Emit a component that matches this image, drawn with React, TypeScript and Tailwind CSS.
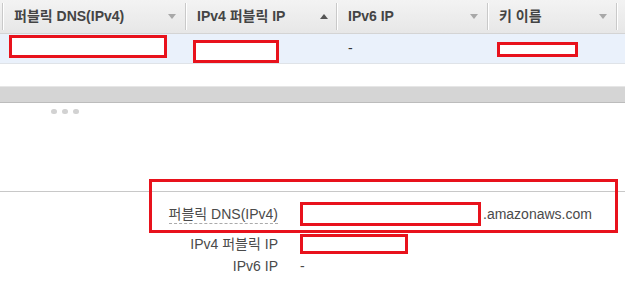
const font = { fontFamily: '"Liberation Sans", "Noto Sans CJK KR", sans-serif' };

function DownArrow() {
  return <span className="ml-auto mr-[9px] h-0 w-0 border-x-[4px] border-t-[5px] border-x-transparent border-t-[#a8a8a8]" />;
}

function UpArrow() {
  return <span className="ml-auto mr-[8px] h-0 w-0 border-x-[4px] border-b-[5px] border-x-transparent border-b-[#555]" />;
}

function HeaderCell({ label, sort }: { label?: string; sort?: 'up' | 'down' }) {
  return (
    <div className="flex h-full items-center py-[3px]">
      <span className="h-full w-[2px] border-l border-[#c9c9c9] bg-white" />
      <div className="flex flex-1 items-center pl-[10px]">
        {label && <span className="text-[14px] font-bold text-[#444]">{label}</span>}
        {sort === 'down' && <DownArrow />}
        {sort === 'up' && <UpArrow />}
      </div>
    </div>
  );
}

function Redact({ className }: { className: string }) {
  return <div className={`border-[3px] border-[#e8121c] bg-white ${className}`} />;
}

export default function App() {
  return (
    <div className="relative h-[283px] w-[625px] overflow-hidden bg-white text-[#444]" style={font}>
      <div className="grid h-[34px] grid-cols-[2px_183px_151px_151px_129px_1fr] border-b border-[#d4d4d4] bg-gradient-to-b from-[#f3f3f3] to-[#e7e7e7]">
        <div />
        <HeaderCell label="퍼블릭 DNS(IPv4)" sort="down" />
        <HeaderCell label="IPv4 퍼블릭 IP" sort="up" />
        <HeaderCell label="IPv6 IP" sort="down" />
        <HeaderCell label="키 이름" sort="down" />
        <HeaderCell />
      </div>

      <div className="grid h-[30px] grid-cols-[2px_183px_151px_151px_129px_1fr] border-b border-[#dfe3e8] bg-[#eaf1fb] text-[14px] text-[#333]">
        <div />
        <div className="pl-[7px] pt-[1px]">
          <Redact className="h-[23px] w-[158px]" />
        </div>
        <div className="pl-[8px] pt-[6px]">
          <Redact className="h-[23px] w-[86px]" />
        </div>
        <div className="flex items-center pl-3">-</div>
        <div className="pl-[10px] pt-[8px]">
          <Redact className="h-[15px] w-[81px]" />
        </div>
        <div />
      </div>

      <div className="h-[22px]" />

      <div className="h-[17px] border-y border-t-[#e6e6e6] border-b-[#bcbcbc] bg-[#d5d5d5]" />

      <div className="flex h-[88px] gap-[5px] pl-[51px] pt-[6px]">
        <span className="h-[5px] w-[6px] rounded-full bg-[#d2d2d2]" />
        <span className="h-[5px] w-[6px] rounded-full bg-[#d2d2d2]" />
        <span className="h-[5px] w-[6px] rounded-full bg-[#d2d2d2]" />
      </div>

      <div className="flex flex-col border-t border-[#c8c8c8] pt-[10px] text-[14px] text-[#4a4a4a]">
        <div className="flex h-[24px] items-center gap-[22px]">
          <div className="w-[278px] text-right">
            <span className="border-b border-dashed border-[#aaa] pb-[1px]">퍼블릭 DNS(IPv4)</span>
          </div>
          <div className="flex items-center">
            <Redact className="h-[24px] w-[181px]" />
            <span className="ml-[2px]">.amazonaws.com</span>
          </div>
        </div>
        <div className="mt-[8px] flex h-[20px] items-center gap-[22px]">
          <div className="w-[278px] text-right">IPv4 퍼블릭 IP</div>
          <Redact className="h-[20px] w-[108px]" />
        </div>
        <div className="mt-[2px] flex h-[20px] items-center gap-[22px]">
          <div className="w-[278px] text-right">IPv6 IP</div>
          <div>-</div>
        </div>
      </div>

      <div className="absolute left-[149px] top-[179px] h-[54px] w-[469px] border-[3px] border-[#e8121c]" />
    </div>
  );
}
